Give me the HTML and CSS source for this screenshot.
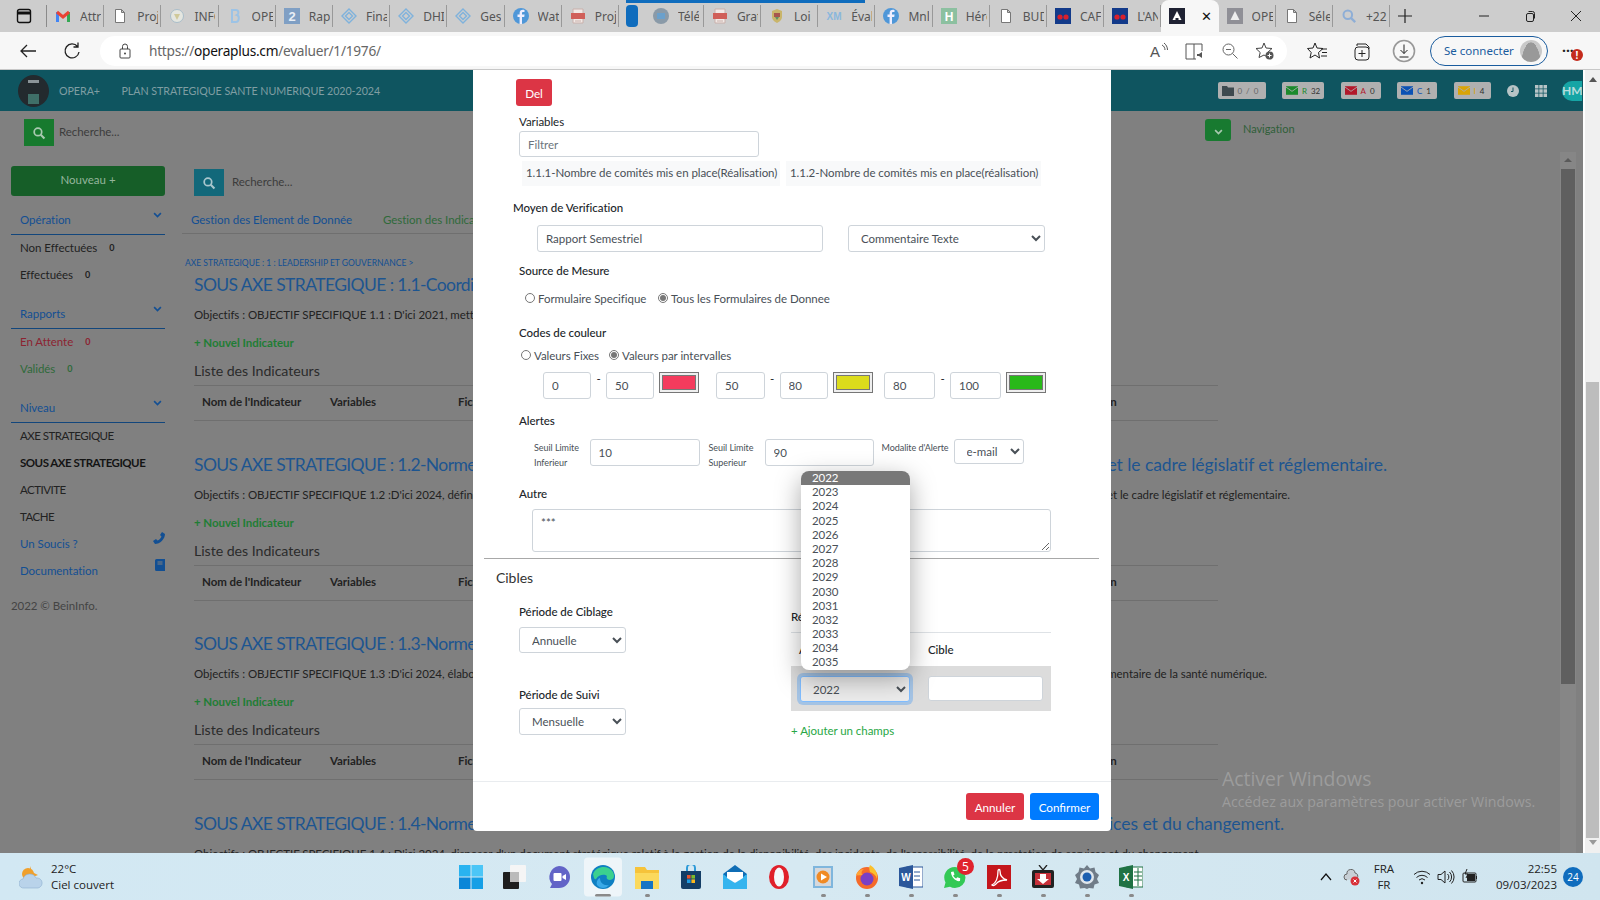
FILE: index.html
```html
<!DOCTYPE html>
<html lang="fr">
<head>
  <meta charset="UTF-8">
  <title>OPERA+ - Evaluer</title>
  <link rel="stylesheet" href="styles.css">
</head>
<body>

  <!-- icon sprite -->
  <svg class="sprite" xmlns="http://www.w3.org/2000/svg">
    <symbol id="i-file" viewBox="0 0 16 16"><path d="M3.5 1.5h6l3 3v10h-9z M9.5 1.5v3h3" fill="#fff" stroke="#777"/></symbol>
    <symbol id="i-gmail" viewBox="0 0 16 16"><path d="M2.5 14V4" stroke="#4285f4" stroke-width="3" fill="none"/><path d="M13.5 14V4" stroke="#34a853" stroke-width="3" fill="none"/><path d="M2 4l6 5 6-5" stroke="#ea4335" stroke-width="3" fill="none"/></symbol>
    <symbol id="i-shield" viewBox="0 0 16 16"><circle cx="8" cy="8" r="6.5" fill="#e4e6e0" stroke="#a9bdc9"/><path d="M5 6h6l-3 6z" fill="#cfc99a"/></symbol>
    <symbol id="i-pale" viewBox="0 0 16 16"><path d="M5 2h4c3 0 3 4 1 5 3 1 2 7-1 7H5z" fill="none" stroke="#9cc3e6" stroke-width="2"/></symbol>
    <symbol id="i-two" viewBox="0 0 16 16"><rect width="16" height="16" fill="#7f9fc4"/><text x="8" y="13" font-size="13" font-weight="700" text-anchor="middle" fill="#e8eef5" font-family="Liberation Sans">2</text></symbol>
    <symbol id="i-diamond" viewBox="0 0 16 16"><path d="M8 1l7 7-7 7-7-7z" fill="none" stroke="#7fb2dc" stroke-width="1.4"/><path d="M8 4.5L11.5 8 8 11.5 4.5 8z" fill="none" stroke="#7fb2dc" stroke-width="1.4"/></symbol>
    <symbol id="i-fb" viewBox="0 0 16 16"><circle cx="8" cy="8" r="8" fill="#4f97d8"/><path d="M9 16V9h2.2l.4-2.5H9V5.2c0-.8.3-1.2 1.2-1.2h1.3V1.900C11 1.800 10.400 1.700 9.800 1.700 7.900 1.700 6.600 2.900 6.600 5v1.500H4.500V9h2.100v7z" fill="#eef"/></symbol>
    <symbol id="i-pdf" viewBox="0 0 16 16"><path d="M3 1h10v14H3z" fill="#f1e9e6" stroke="#c9b0ab"/><rect x="1" y="5" width="14" height="6" fill="#d0605a"/><path d="M5 13h6" stroke="#c9b0ab"/></symbol>
    <symbol id="i-crest" viewBox="0 0 16 16"><path d="M3 3l5-2 5 2v6c0 3-3 5-5 6-2-1-5-3-5-6z" fill="#c9b56a"/><path d="M5 5h6v4H5z" fill="#a7564e"/><path d="M6 9l2 3 2-3z" fill="#5e8f66"/></symbol>
    <symbol id="i-cap" viewBox="0 0 16 16"><rect width="16" height="16" fill="#123a8a"/><circle cx="5" cy="9" r="2.6" fill="#d8202c"/><circle cx="11" cy="9" r="2.6" fill="#d8202c"/></symbol>
    <symbol id="i-opera" viewBox="0 0 16 16"><rect width="16" height="16" fill="#1f2233"/><path d="M8 3l4.500 9h-9z" fill="#fff"/><path d="M6.500 10h3v2h-3z" fill="#1f2233"/></symbol>
    <symbol id="i-opera-off" viewBox="0 0 16 16"><rect width="16" height="16" fill="#8f8f96"/><path d="M8 3l4.500 9h-9z" fill="#eee"/></symbol>
    <symbol id="i-search" viewBox="0 0 16 16"><circle cx="6.800" cy="6.800" r="4.300" fill="none" stroke="currentColor" stroke-width="2"/><path d="M10 10l4.200 4.200" stroke="currentColor" stroke-width="2.400"/></symbol>
    <symbol id="i-chev" viewBox="0 0 12 8"><path d="M1.500 1.500L6 6l4.500-4.500" fill="none" stroke="currentColor" stroke-width="2.200"/></symbol>
    <symbol id="i-env" viewBox="0 0 14 10"><rect width="14" height="10" fill="currentColor"/><path d="M0 1l7 5 7-5" fill="none" stroke="#b0b0b0" stroke-width="1"/></symbol>
  </svg>

  <!-- Browser tabs -->
  <div class="tabbar">
    <div class="tab-side">
      <svg width="16" height="16" viewBox="0 0 16 16"><rect x="1.500" y="1.500" width="13" height="13" rx="2" fill="none" stroke="#111" stroke-width="1.400"/><path d="M1.500 5h13" stroke="#111" stroke-width="3"/></svg>
    </div>
    <div class="tab"><svg class="favicon"><use href="#i-gmail"/></svg><span>Attribution</span></div>
    <div class="tab"><svg class="favicon"><use href="#i-file"/></svg><span>Projet</span></div>
    <div class="tab"><svg class="favicon"><use href="#i-shield"/></svg><span>INFOS</span></div>
    <div class="tab"><svg class="favicon"><use href="#i-pale"/></svg><span>OPERA</span></div>
    <div class="tab"><svg class="favicon"><use href="#i-two"/></svg><span>Rapport</span></div>
    <div class="tab"><svg class="favicon"><use href="#i-diamond"/></svg><span>Finance</span></div>
    <div class="tab"><svg class="favicon"><use href="#i-diamond"/></svg><span>DHIS2</span></div>
    <div class="tab"><svg class="favicon"><use href="#i-diamond"/></svg><span>Gestion</span></div>
    <div class="tab"><svg class="favicon"><use href="#i-fb"/></svg><span>Watch</span></div>
    <div class="tab"><svg class="favicon"><use href="#i-pdf"/></svg><span>Projet</span></div>
    <div class="tab-group"><i class="group-pill"></i><i class="group-line"></i></div>
    <div class="tab tab-wide"><svg class="favicon" viewBox="0 0 16 16"><circle cx="8" cy="8" r="8" fill="#8a9aa8"/><rect x="4" y="5" width="8" height="6" fill="#6aa0cc"/></svg><span>Télécharger</span></div>
    <div class="tab"><svg class="favicon"><use href="#i-pdf"/></svg><span>Gratuit</span></div>
    <div class="tab"><svg class="favicon"><use href="#i-crest"/></svg><span>Loi</span></div>
    <div class="tab"><svg class="favicon" viewBox="0 0 16 16"><text x="8" y="12" font-size="10" font-weight="700" text-anchor="middle" fill="#8ab7dd" font-family="Liberation Sans">XM</text></svg><span>Évaluation</span></div>
    <div class="tab"><svg class="favicon"><use href="#i-fb"/></svg><span>Mnl</span></div>
    <div class="tab"><svg class="favicon" viewBox="0 0 16 16"><rect width="16" height="16" fill="#8cc0a0"/><text x="8" y="13" font-size="12" font-weight="700" text-anchor="middle" fill="#fff" font-family="Liberation Sans">H</text></svg><span>Héros</span></div>
    <div class="tab"><svg class="favicon"><use href="#i-file"/></svg><span>BUDGET</span></div>
    <div class="tab"><svg class="favicon"><use href="#i-cap"/></svg><span>CAFE</span></div>
    <div class="tab"><svg class="favicon"><use href="#i-cap"/></svg><span>L'ANALYSE</span></div>
    <div class="tab tab-active"><svg class="favicon"><use href="#i-opera"/></svg><b>&#x2715;</b></div>
    <div class="tab"><svg class="favicon"><use href="#i-opera-off"/></svg><span>OPERA</span></div>
    <div class="tab"><svg class="favicon"><use href="#i-file"/></svg><span>Sélection</span></div>
    <div class="tab"><svg class="favicon tab-search"><use href="#i-search"/></svg><span>+22</span></div>
    <div class="tab-new">
      <svg width="16" height="16" viewBox="0 0 16 16"><path d="M8 1v14M1 8h14" stroke="#222" stroke-width="1.200"/></svg>
    </div>
    <div class="win-btns">
      <svg width="12" height="12" viewBox="0 0 12 12"><path d="M1 6h10" stroke="#222"/></svg>
      <svg width="12" height="12" viewBox="0 0 12 12"><rect x="2.500" y="3.500" width="7" height="8" rx="1.500" fill="none" stroke="#222"/><path d="M4.500 1.500h4a2 2 0 0 1 2 2v5" fill="none" stroke="#222"/></svg>
      <svg width="12" height="12" viewBox="0 0 12 12"><path d="M1 1l10 10M11 1L1 11" stroke="#222"/></svg>
    </div>
  </div>

  <!-- Address bar -->
  <div class="addressbar">
    <svg class="nav-icon" width="20" height="20" viewBox="0 0 20 20"><path d="M18 10H3M9 4l-6 6 6 6" fill="none" stroke="#222" stroke-width="1.300"/></svg>
    <svg class="nav-icon" width="20" height="20" viewBox="0 0 20 20"><path d="M15.500 5.500A7 7 0 1 0 17 11M16 1.500v4.500h-4.500" fill="none" stroke="#222" stroke-width="1.300"/></svg>
    <div class="omnibox">
      <svg width="14" height="16" viewBox="0 0 14 16"><rect x="2" y="6" width="10" height="9" rx="1" fill="none" stroke="#444"/><path d="M4.500 6V3.500a2.500 2.500 0 0 1 5 0V6" fill="none" stroke="#444"/><circle cx="7" cy="10.500" r="1" fill="#444"/></svg>
      <span class="url">https://<em>operaplus.cm</em>/evaluer/1/1976/</span>
      <div class="omni-tools">
        <svg width="20" height="20" viewBox="0 0 20 20"><text x="1" y="16" font-size="15" fill="#555" font-family="Liberation Sans">A</text><path d="M13 4c2 1 3 3 3 5M15 2c2 1.500 3.500 4 3.500 7" fill="none" stroke="#555"/></svg>
        <svg width="20" height="20" viewBox="0 0 20 20"><path d="M1 3h8v15H1zM9 3h8v7M9 18h2" fill="none" stroke="#555"/><path d="M12 13h2l3-2v6l-3-2h-2z" fill="#555"/></svg>
        <svg width="18" height="18" viewBox="0 0 18 18"><circle cx="7.500" cy="7.500" r="5.500" fill="none" stroke="#666"/><path d="M5 7.500h5M11.500 11.500l5 5" stroke="#666"/></svg>
        <svg width="20" height="20" viewBox="0 0 20 20"><path d="M9 2l2 5 6 .5-4.500 4 1 5-4.500-2.500-5 2.500 1.200-5L1 7.500 7 7z" fill="none" stroke="#444"/><circle cx="14.500" cy="14.500" r="4" fill="#555"/><path d="M14.500 12.500v4M12.500 14.500h4" stroke="#fff"/></svg>
      </div>
    </div>
    <svg class="bar-icon" width="20" height="20" viewBox="0 0 20 20"><path d="M8 2l2 5 6 .5-4.500 4 1 5.500-4.500-3-5 3 1.200-5.500L0.500 7.500 6 7z" fill="none" stroke="#222"/><path d="M14 8h6M15 11.500h5M14 15h6" stroke="#222"/></svg>
    <svg class="bar-icon bar-col" width="20" height="20" viewBox="0 0 20 20"><path d="M4 5V3h9l3 3v2" fill="none" stroke="#222"/><rect x="2" y="6" width="14" height="13" rx="3" fill="none" stroke="#222"/><path d="M9 9v7M5.500 12.500h7" stroke="#222"/></svg>
    <svg class="bar-icon bar-dl" width="24" height="24" viewBox="0 0 24 24"><circle cx="12" cy="12" r="10.500" fill="none" stroke="#999" stroke-width="1.600"/><path d="M12 5.500v9M8.500 11l3.500 3.500 3.500-3.500M7.500 18h9" fill="none" stroke="#222"/></svg>
    <div class="signin"><span>Se connecter</span><i class="avatar"></i></div>
    <div class="more">···<i>!</i></div>
  </div>

  <!-- Browser viewport -->
  <div class="viewport">
    <div class="page">
      <header class="topbar">
        <div class="logo"><i></i></div>
        <span class="brand">OPERA+</span>
        <span class="plan">PLAN STRATEGIQUE SANTE NUMERIQUE 2020-2024</span>
        <div class="chips">
          <div class="chip chip-folder">
            <svg width="12" height="10" viewBox="0 0 12 10"><path d="M0 0h5l1 1.500h6V10H0z" fill="#3e4a4f"/></svg>
            <span>0 &nbsp;/&nbsp; 0</span>
          </div>
          <div class="chip chip-r"><svg class="env"><use href="#i-env"/></svg><span class="c-letter">R</span><span>32</span></div>
          <div class="chip chip-a"><svg class="env"><use href="#i-env"/></svg><span class="c-letter">A</span><span>0</span></div>
          <div class="chip chip-c"><svg class="env"><use href="#i-env"/></svg><span class="c-letter">C</span><span>1</span></div>
          <div class="chip chip-i"><svg class="env"><use href="#i-env"/></svg><span class="c-letter">I</span><span>4</span></div>
          <svg class="clock" width="12" height="12" viewBox="0 0 12 12"><circle cx="6" cy="6" r="6" fill="#b7c4c6"/><path d="M6 2.500V6.500H4" fill="none" stroke="#115560"/></svg>
          <svg class="apps" width="12" height="12" viewBox="0 0 12 12"><path d="M0 0h3.500v3.500H0zM4.250 0h3.500v3.500h-3.500zM8.500 0H12v3.500H8.500zM0 4.250h3.500v3.500H0zM4.250 4.250h3.500v3.500h-3.500zM8.500 4.250H12v3.500H8.500zM0 8.500h3.500V12H0zM4.250 8.500h3.500V12h-3.500zM8.500 8.500H12V12H8.500z" fill="#b7c4c6"/></svg>
          <div class="hm">HM</div>
        </div>
      </header>

      <div class="page-scroll">
        <div class="content">

          <div class="searchbar">
            <button class="search-btn search-green"><svg width="14" height="14"><use href="#i-search"/></svg></button>
            <span class="search-text">Recherche...</span>
            <div class="navigation">
              <button class="nav-toggle"><svg width="9" height="6"><use href="#i-chev"/></svg></button>
              <span>Navigation</span>
            </div>
          </div>

          <div class="columns">
            <!-- Sidebar -->
            <aside class="sidebar">
              <button class="btn-new">Nouveau +</button>

              <div class="sb-head"><span>Opération</span><svg width="9" height="6"><use href="#i-chev"/></svg></div>
              <div class="sb-item">Non Effectuées <small>0</small></div>
              <div class="sb-item">Effectuées <small>0</small></div>

              <div class="sb-head sb-gap"><span>Rapports</span><svg width="9" height="6"><use href="#i-chev"/></svg></div>
              <div class="sb-item sb-red">En Attente <small>0</small></div>
              <div class="sb-item sb-green">Validés <small>0</small></div>

              <div class="sb-head sb-gap"><span>Niveau</span><svg width="9" height="6"><use href="#i-chev"/></svg></div>
              <div class="sb-item sb-caps">AXE STRATEGIQUE</div>
              <div class="sb-item sb-caps sb-current">SOUS AXE STRATEGIQUE</div>
              <div class="sb-item sb-caps">ACTIVITE</div>
              <div class="sb-item sb-caps">TACHE</div>
              <div class="sb-item sb-link"><span>Un Soucis ?</span>
                <svg width="12" height="12" viewBox="0 0 12 12"><path d="M9 0l3 2c0 5-5 10-10 10L0 9l3-2 1.500 1.500C6 8 8 6 8.500 4.500L7 3z" fill="#124f93"/></svg>
              </div>
              <div class="sb-item sb-link"><span>Documentation</span>
                <svg width="10" height="12" viewBox="0 0 10 12"><path d="M1.500 0H10v12H1.500A1.500 1.500 0 0 1 0 10.500v-9A1.500 1.500 0 0 1 1.500 0z" fill="#124f93"/><path d="M2.500 3h5M2.500 5h5" stroke="#808080"/></svg>
              </div>
              <div class="sb-copy">2022 © BeinInfo.</div>
            </aside>

            <!-- Main -->
            <main class="main">
              <div class="main-search">
                <button class="search-btn search-teal"><svg width="14" height="14"><use href="#i-search"/></svg></button>
                <span class="search-text">Recherche...</span>
              </div>
              <nav class="main-tabs">
                <a class="tab-blue">Gestion des Element de Donnée</a>
                <a class="tab-green">Gestion des Indicateurs</a>
              </nav>
              <div class="crumb">AXE STRATEGIQUE : 1 : LEADERSHIP ET GOUVERNANCE &gt;</div>

              <section class="axis">
                <h4 class="axis-title"><span>SOUS AXE STRATEGIQUE : 1.1-Coordination</span></h4>
                <p class="axis-goal"><span>Objectifs : OBJECTIF SPECIFIQUE 1.1 : D'ici 2021, mettre en place</span></p>
                <a class="axis-add">+ Nouvel Indicateur</a>
                <h5 class="axis-list">Liste des Indicateurs</h5>
                <div class="axis-table"><span>Nom de l'Indicateur</span><span>Variables</span><span>Fichiers</span><span>Validation</span></div>
              </section>

              <section class="axis">
                <h4 class="axis-title title-12"><span>SOUS AXE STRATEGIQUE : 1.2-Normes</span><span>et le cadre législatif et réglementaire.</span></h4>
                <p class="axis-goal goal-12"><span>Objectifs : OBJECTIF SPECIFIQUE 1.2 :D'ici 2024, définir les normes</span><span>et le cadre législatif et réglementaire.</span></p>
                <a class="axis-add">+ Nouvel Indicateur</a>
                <h5 class="axis-list">Liste des Indicateurs</h5>
                <div class="axis-table"><span>Nom de l'Indicateur</span><span>Variables</span><span>Fichiers</span><span>Validation</span></div>
              </section>

              <section class="axis">
                <h4 class="axis-title"><span>SOUS AXE STRATEGIQUE : 1.3-Normes</span></h4>
                <p class="axis-goal goal-13"><span>Objectifs : OBJECTIF SPECIFIQUE 1.3 :D'ici 2024, élaborer</span><span>réglementaire de la santé numérique.</span></p>
                <a class="axis-add">+ Nouvel Indicateur</a>
                <h5 class="axis-list">Liste des Indicateurs</h5>
                <div class="axis-table"><span>Nom de l'Indicateur</span><span>Variables</span><span>Fichiers</span><span>Validation</span></div>
              </section>

              <section class="axis">
                <h4 class="axis-title title-14"><span>SOUS AXE STRATEGIQUE : 1.4-Normes</span><span>de services et du changement.</span></h4>
                <p class="axis-goal goal-14"><span>Objectifs : OBJECTIF SPECIFIQUE 1.4 : D'ici 2024, disposer d'un document stratégique relatif à la gestion de la disponibilité, des incidents, de l'accessibilité, de la prestation de services et du changement.</span></p>
              </section>
            </main>
          </div>
        </div>

        <div class="inner-scroll">
          <i class="sb-up"></i>
          <i class="inner-thumb"></i>
        </div>
      </div>

      <!-- Modal -->
      <div class="modal">
        <div class="modal-body">
          <button class="btn btn-del">Del</button>

          <label class="field-label label-vars">Variables</label>
          <input class="control filter" placeholder="Filtrer">
          <div class="var-chips">
            <span class="var-a">1.1.1-Nombre de comités mis en place(Réalisation)</span>
            <span class="var-b">1.1.2-Nombre de comités mis en place(réalisation)</span>
          </div>

          <label class="field-label label-moyen">Moyen de Verification</label>
          <div class="moyen-row">
            <input class="control moyen-input" value="Rapport Semestriel">
            <select class="control moyen-select"><option>Commentaire Texte</option></select>
          </div>

          <label class="field-label label-source">Source de Mesure</label>
          <div class="radios radios-source">
            <label class="radio-a"><input type="radio" name="source"> Formulaire Specifique</label>
            <label><input type="radio" name="source" checked> Tous les Formulaires de Donnee</label>
          </div>

          <label class="field-label label-codes">Codes de couleur</label>
          <div class="radios radios-codes">
            <label class="radio-b"><input type="radio" name="codes"> Valeurs Fixes</label>
            <label><input type="radio" name="codes" checked> Valeurs par intervalles</label>
          </div>

          <div class="range-row">
            <div class="range-group rg-a">
              <input class="control" value="0"><span class="dash">-</span><input class="control" value="50">
              <input class="swatch" type="color" value="#f43b5d">
            </div>
            <div class="range-group rg-b">
              <input class="control" value="50"><span class="dash">-</span><input class="control" value="80">
              <input class="swatch" type="color" value="#dcdc1c">
            </div>
            <div class="range-group rg-c">
              <input class="control" value="80"><span class="dash">-</span><input class="control" value="100">
              <input class="swatch" type="color" value="#29b919">
            </div>
          </div>

          <label class="field-label label-alert">Alertes</label>
          <div class="alert-row">
            <small class="lim-a">Seuil Limite<br>Inferieur</small>
            <input class="control lim-input-a" value="10">
            <small class="lim-b">Seuil Limite<br>Superieur</small>
            <input class="control lim-input-b" value="90">
            <small class="lim-c">Modalite d'Alerte</small>
            <select class="control lim-select"><option>e-mail</option></select>
          </div>

          <label class="field-label label-autre">Autre</label>
          <textarea class="control autre">***</textarea>

          <hr class="modal-hr">
          <div class="cibles-title">Cibles</div>

          <div class="cibles">
            <div class="cibles-left">
              <label class="field-label">Période de Ciblage</label>
              <select class="control period"><option>Annuelle</option></select>
              <label class="field-label label-suivi">Période de Suivi</label>
              <select class="control period period-b"><option>Mensuelle</option></select>
            </div>
            <div class="cibles-right">
              <label class="field-label label-repart">Répartition</label>
              <div class="cible-head"><span>Année</span><span>Cible</span></div>
              <div class="cible-row">
                <select class="control cible-year"><option>2022</option></select>
                <input class="control cible-input">
              </div>
              <a class="add-field">+ Ajouter un champs</a>
            </div>
          </div>
        </div>

        <div class="modal-footer">
          <button class="btn btn-cancel">Annuler</button>
          <button class="btn btn-ok">Confirmer</button>
        </div>

        <!-- open select list -->
        <ul class="year-list">
          <li class="year-current">2022</li><li>2023</li><li>2024</li><li>2025</li><li>2026</li><li>2027</li><li>2028</li>
          <li>2029</li><li>2030</li><li>2031</li><li>2032</li><li>2033</li><li>2034</li><li>2035</li>
        </ul>
      </div>

      <div class="activate">
        <div>Activer Windows</div>
        <small>Accédez aux paramètres pour activer Windows.</small>
      </div>
    </div>

    <!-- browser scrollbar -->
    <div class="page-scrollbar">
      <i class="arrow-up"></i>
      <i class="page-thumb"></i>
      <i class="arrow-down"></i>
    </div>
  </div>

  <!-- Windows taskbar -->
  <footer class="taskbar">
    <div class="weather">
      <svg width="24" height="26" viewBox="0 0 24 26"><path d="M11 2l2 6 6 3-8 3z" fill="#f0a02c"/><circle cx="9" cy="10" r="6" fill="#f0a02c"/><path d="M5 24a4.500 4.500 0 0 1-1-9 7 7 0 0 1 13-1 5 5 0 0 1 2 10z" fill="#b9d3ea" stroke="#8eb0d0" stroke-width=".6"/></svg>
      <div class="weather-text"><span>22°C</span><span>Ciel couvert</span></div>
    </div>

    <div class="dock">
      <div class="dock-item dock-start"><svg width="24" height="24" viewBox="0 0 24 24"><path d="M0 0h11.500v11.500H0z" fill="#29b3f0"/><path d="M12.500 0H24v11.500H12.500z" fill="#4cc6f7"/><path d="M0 12.500h11.500V24H0z" fill="#0a86d8"/><path d="M12.500 12.500H24V24H12.500z" fill="#159fe6"/></svg></div>
      <div class="dock-item"><svg width="24" height="24" viewBox="0 0 24 24"><rect x="7" y="0" width="16" height="17" rx="1" fill="#f5f5f5"/><rect x="0" y="7" width="16" height="17" rx="1" fill="#1e1e1e"/><rect x="7" y="7" width="9" height="10" fill="#bbb"/></svg></div>
      <div class="dock-item"><svg width="24" height="24" viewBox="0 0 24 24"><path d="M12 1a11 11 0 0 1 0 22H3l2-4A11 11 0 0 1 12 1z" fill="#6264c7"/><rect x="6.500" y="8" width="8" height="8" rx="1" fill="#fff"/><path d="M15.500 11l3.500-2v6l-3.500-2z" fill="#fff"/></svg></div>
      <div class="dock-item dock-active"><svg width="24" height="24" viewBox="0 0 24 24"><circle cx="12" cy="12" r="12" fill="#0f7fc2"/><path d="M2 9C5 1 17-1 22 7c2 4 1 8-3 8-3 0-4-2-3-4-2-2-8-2-11 3-1 1-2 0-3-5z" fill="#3bd08f"/><path d="M9 13c0 5 4 8 9 7-3 4-9 4-12 0-1-3 1-7 3-7z" fill="#39a9e8"/></svg></div>
      <div class="dock-item dock-open"><svg width="24" height="24" viewBox="0 0 24 24"><path d="M0 2h10l2 3h12v19H0z" fill="#f6c33a"/><path d="M0 8h24v16H0z" fill="#fbd95c"/><rect x="6" y="16" width="12" height="8" fill="#1574c4"/></svg></div>
      <div class="dock-item"><svg width="24" height="24" viewBox="0 0 24 24"><path d="M8 6V3a4 4 0 0 1 8 0v3" fill="none" stroke="#2f9bd8" stroke-width="2"/><path d="M2 6h20v16a2 2 0 0 1-2 2H4a2 2 0 0 1-2-2z" fill="#143e66"/><rect x="8" y="10" width="3.600" height="3.600" fill="#e9542e"/><rect x="12.400" y="10" width="3.600" height="3.600" fill="#7fba2a"/><rect x="8" y="14.400" width="3.600" height="3.600" fill="#1f9be0"/><rect x="12.400" y="14.400" width="3.600" height="3.600" fill="#fbb81e"/></svg></div>
      <div class="dock-item"><svg width="24" height="24" viewBox="0 0 24 24"><path d="M0 9L12 0l12 9v15H0z" fill="#0f6db5"/><path d="M0 9l12 9 12-9v15H0z" fill="#35b4ee"/><path d="M4 7h16v6l-8 5-8-5z" fill="#fff"/></svg></div>
      <div class="dock-item"><svg width="24" height="24" viewBox="0 0 24 24"><ellipse cx="12" cy="12" rx="10" ry="12" fill="#e0202a"/><ellipse cx="12" cy="12" rx="5" ry="9.500" fill="#f3f8fb"/></svg></div>
      <div class="dock-item dock-open"><svg width="24" height="24" viewBox="0 0 24 24"><rect x="2" y="1" width="20" height="22" fill="#7fb6dd"/><rect x="4" y="3" width="16" height="18" fill="#d5d8dc"/><circle cx="12" cy="12" r="6.500" fill="#f08a24"/><path d="M10 8.500l6 3.500-6 3.500z" fill="#fff"/></svg></div>
      <div class="dock-item dock-open"><svg width="24" height="24" viewBox="0 0 24 24"><circle cx="12" cy="13" r="11" fill="#f56a2a"/><circle cx="12" cy="14" r="6.500" fill="#7a3fc4"/><path d="M15 0c5 3 8 8 7 14-1-4-4-6-7-7-1-3-1-5 0-7z" fill="#fbc02d"/><path d="M1 10c1-3 4-6 8-6-3 2-3 5-1 6-3 0-5 1-7 0z" fill="#ffa436"/></svg></div>
      <div class="dock-item dock-open"><svg width="24" height="24" viewBox="0 0 24 24"><rect x="8" y="2" width="16" height="20" fill="#fff" stroke="#2b579a"/><path d="M15 7h6M15 11h6M15 15h6" stroke="#2b579a"/><path d="M0 3l14-3v24L0 21z" fill="#2b579a"/><text x="7" y="16" font-size="10" font-weight="700" text-anchor="middle" fill="#fff" font-family="Liberation Sans">W</text></svg></div>
      <div class="dock-item dock-open"><svg width="24" height="24" viewBox="0 0 24 24"><path d="M12 2a10.500 10.500 0 0 1 0 21 10 10 0 0 1-5-1.300L1 23l1.500-5.500A10.500 10.500 0 0 1 12 2z" fill="#33c956"/><path d="M8 7l2.500-.5 1 3-1.300 1c.6 1.500 1.500 2.400 3 3l1-1.300 3 1L17 16c-4 1-9-4-9-9z" fill="#fff"/></svg><b class="dock-badge">5</b></div>
      <div class="dock-item dock-open"><svg width="24" height="24" viewBox="0 0 24 24"><rect width="24" height="24" fill="#c4161c"/><path d="M5 20c4-2 6-8 6-14 0-2 2-2 2 0 0 5 3 8 7 9-4 0-9 1-11 4-1 1-3 2-4 1z" fill="none" stroke="#fff" stroke-width="1.300"/></svg></div>
      <div class="dock-item dock-open"><svg width="24" height="24" viewBox="0 0 24 24"><path d="M8 0l4 5 4-5" fill="none" stroke="#222" stroke-width="1.300"/><rect x="1" y="5" width="22" height="18" rx="2" fill="#222"/><rect x="4" y="8" width="16" height="12" fill="#c8303a"/><path d="M9 9h6v5h3l-6 5-6-5h3z" fill="#fff"/></svg></div>
      <div class="dock-item dock-open"><svg width="24" height="24" viewBox="0 0 24 24"><path d="M12 0l3 3.500 4.500-1 1 4.500 3.500 3-2 4 2 4-4.500 1.500-1 4-4.500-.5L12 24l-2.500-1-4.500.5-1-4L0 18l2-4-2-4 3.500-3 1-4.500 4.500 1z" fill="#707c88"/><circle cx="12" cy="12" r="7" fill="#dfe6ec"/><circle cx="12" cy="12" r="4.500" fill="#1d5fb0"/></svg></div>
      <div class="dock-item dock-open"><svg width="24" height="24" viewBox="0 0 24 24"><rect x="8" y="2" width="16" height="20" fill="#fff" stroke="#1f7244"/><path d="M15 7h8M15 11h8M15 15h8M19 3v18" stroke="#1f7244"/><path d="M0 3l14-3v24L0 21z" fill="#1f7244"/><text x="7" y="16" font-size="10" font-weight="700" text-anchor="middle" fill="#fff" font-family="Liberation Sans">X</text></svg></div>
    </div>

    <div class="tray">
      <svg class="tray-caret" width="12" height="8" viewBox="0 0 12 8"><path d="M1 7l5-6 5 6" fill="none" stroke="#111" stroke-width="1.200"/></svg>
      <svg class="tray-cloud" width="18" height="18" viewBox="0 0 18 18"><path d="M4 12a3 3 0 0 1 0-6 4 4 0 0 1 8-1 3 3 0 0 1 2 5" fill="#c8d0d6" stroke="#666"/><circle cx="12" cy="13" r="4.500" fill="#d8323a"/><path d="M10.500 11.500l3 3M13.500 11.500l-3 3" stroke="#fff"/></svg>
      <div class="tray-lang"><span>FRA</span><span>FR</span></div>
      <svg class="tray-wifi" width="18" height="16" viewBox="0 0 18 16"><path d="M1 5.500a11.500 11.500 0 0 1 16 0M3.500 8.500a8 8 0 0 1 11 0M6 11a4.500 4.500 0 0 1 6 0" fill="none" stroke="#222"/><circle cx="9" cy="14" r="1.200" fill="#222"/></svg>
      <svg class="tray-sound" width="18" height="16" viewBox="0 0 18 16"><path d="M1 5.500h3L8 2v12l-4-3.500H1z" fill="none" stroke="#222"/><path d="M10.500 5a4 4 0 0 1 0 6M12.500 3a7 7 0 0 1 0 10M14.500 1.500a9.500 9.500 0 0 1 0 13" fill="none" stroke="#222"/></svg>
      <svg class="tray-batt" width="16" height="16" viewBox="0 0 16 16"><rect x="1" y="4" width="13" height="9" rx="1" fill="none" stroke="#222"/><rect x="5" y="5" width="8" height="7" fill="#222"/><path d="M14.500 7v3" stroke="#222"/><path d="M5 0L3 5h3l-2 4" fill="none" stroke="#222"/></svg>
      <div class="tray-clock"><span>22:55</span><span>09/03/2023</span></div>
      <div class="tray-badge">24</div>
    </div>
  </footer>

</body>
</html>
```

FILE: styles.css
```css
/* Global */
* {
  box-sizing: border-box;
}

html, body {
  margin: 0;
  height: 900px;
  overflow: hidden;
}

body {
  font-family: Lato, "Noto Sans", sans-serif;
  font-size: 11.5px;
  letter-spacing: -.05px;
  color: #222;
  display: flex;
  flex-direction: column;
  background: #fff;
}

.sprite {
  position: absolute;
  width: 0;
  height: 0;
}

button {
  border: none;
  font-family: inherit;
  padding: 0;
}

/* Browser tabs */
.tabbar {
  height: 32px;
  flex: none;
  background: #cdcdcd;
  display: flex;
  align-items: center;
  position: relative;
  font-family: "Noto Sans", sans-serif;
  letter-spacing: 0;
}

.tab-side {
  width: 47px;
  padding-left: 16px;
  display: flex;
  border-right: 1px solid #8a8a8a;
  height: 22px;
  align-items: center;
}

.tab {
  flex: 0 0 57.2px;
  height: 22px;
  display: flex;
  align-items: center;
  padding-left: 8px;
  gap: 9px;
  border-right: 1px solid #999;
  overflow: hidden;
  font-size: 12px;
  color: #555;
  white-space: nowrap;
  position: relative;
}

.tab span {
  overflow: hidden;
  flex: 0 0 21px;
}

.favicon {
  width: 16px;
  height: 16px;
  flex: none;
}

.tab-search {
  color: #8eaed6;
}

.tab-wide {
  flex-basis: 59px;
}

.tab-active {
  height: 32px;
  background: #f7f7f7;
  border-right: none;
  border-radius: 8px 8px 0 0;
  gap: 16px;
  align-self: flex-end;
}

.tab-active b {
  font-weight: 400;
  font-size: 13px;
  color: #111;
}

.tab-group {
  flex: 0 0 26px;
  height: 22px;
  padding-left: 7px;
  position: relative;
}

.group-pill {
  display: block;
  width: 12px;
  height: 22px;
  background: #0f6cbd;
  border-radius: 4px;
}

.group-line {
  position: absolute;
  top: -5px;
  left: 7px;
  width: 239px;
  height: 3px;
  background: #0f6cbd;
}

.tab-new {
  margin-left: 7px;
  display: flex;
}

.win-btns {
  margin-left: auto;
  display: flex;
  gap: 34px;
  padding-right: 18px;
}

/* Address bar */
.addressbar {
  height: 38px;
  flex: none;
  background: #f7f7f7;
  display: flex;
  align-items: center;
  border-bottom: 1px solid #c8c8c8;
  padding-left: 18px;
  font-family: "Noto Sans", sans-serif;
  letter-spacing: 0;
}

.nav-icon {
  margin-right: 24px;
}

.omnibox {
  margin-left: -6px;
  width: 1187px;
  height: 30px;
  background: #fff;
  border-radius: 15px;
  display: flex;
  align-items: center;
  padding-left: 18px;
  gap: 17px;
}

.url {
  font-size: 13.7px;
  color: #666;
  letter-spacing: -.02em;
}

.url em {
  font-style: normal;
  color: #111;
}

.omni-tools {
  margin-left: auto;
  display: flex;
  align-items: center;
  gap: 16px;
  padding-right: 12px;
}

.bar-icon {
  margin-left: 20px;
  flex: none;
}

.bar-col {
  margin-left: 26px;
}

.bar-dl {
  margin-left: 19px;
}

.signin {
  margin-left: 14px;
  width: 118px;
  height: 30px;
  border: 1px solid #1a5c9e;
  border-radius: 15px;
  display: flex;
  align-items: center;
  padding-left: 13px;
  gap: 6px;
  color: #1a5c9e;
  font-size: 11.5px;
  white-space: nowrap;
}

.avatar {
  width: 22px;
  height: 22px;
  border-radius: 50%;
  background: radial-gradient(circle at 50% 35%, #999 0 5px, transparent 5.5px), radial-gradient(ellipse at 50% 100%, #999 0 9px, #c9c9c9 9.5px);
  flex: none;
}

.more {
  position: relative;
  margin-left: 14px;
  font-weight: 700;
  font-size: 14px;
  line-height: 14px;
}

.more i {
  position: absolute;
  left: 9px;
  top: 5px;
  width: 12px;
  height: 12px;
  border-radius: 50%;
  background: #c42b1c;
  color: #fff;
  font-size: 10px;
  font-style: normal;
  line-height: 12px;
  text-align: center;
}

/* Viewport */
.viewport {
  height: 783px;
  flex: none;
  display: flex;
}

.page {
  width: 1583px;
  position: relative;
  overflow: hidden;
  background: #808080;
  display: flex;
  flex-direction: column;
}

.page-scroll {
  flex: 1;
  display: flex;
  min-height: 0;
}

.content {
  flex: 1;
  min-width: 0;
  overflow: hidden;
}

/* Top bar */
.topbar {
  height: 41px;
  flex: none;
  background: #0f5560;
  display: flex;
  align-items: center;
  padding-left: 18px;
  color: #7f9ea3;
  font-size: 10.7px;
}

.logo {
  width: 31px;
  height: 32px;
  border-radius: 50%;
  background: #232a2e;
  padding: 5px 10px 3px;
  margin-right: 10px;
}

.logo i {
  display: block;
  height: 100%;
  background: linear-gradient(#8b9498 0 3px, transparent 3px 14px, #3f6f68 14px);
}

.plan {
  margin-left: 21.5px;
}

.chips {
  margin-left: auto;
  display: flex;
  align-items: center;
  gap: 16.5px;
  padding-right: 1px;
}

.chip {
  height: 17px;
  background: #b0b0b0;
  border-radius: 2px;
  display: flex;
  align-items: center;
  gap: 4px;
  padding-left: 4px;
  font-size: 8px;
  color: #2e2e2e;
}

.chip-folder {
  width: 48px;
}

.chip-folder span {
  color: #666;
}

.chip-r {
  width: 42px;
  color: #333;
}

.chip-a {
  width: 40px;
}

.chip-c {
  width: 40px;
}

.chip-i {
  width: 37px;
}

.env {
  width: 12px;
  height: 9px;
}

.chip-r .env, .chip-r .c-letter {
  color: #1c8a2c;
}

.chip-a .env, .chip-a .c-letter {
  color: #b2182b;
}

.chip-c .env, .chip-c .c-letter {
  color: #0c52b4;
}

.chip-i .env, .chip-i .c-letter {
  color: #d9a406;
}

.apps {
  margin-left: -1px;
}

.hm {
  width: 20px;
  height: 20px;
  overflow: hidden;
  border-radius: 10px 0 0 10px;
  background: #16a5a5;
  color: #b7dcdc;
  font-size: 12px;
  font-weight: 700;
  line-height: 20px;
  white-space: nowrap;
  margin-left: -1px;
}

/* Search rows */
.searchbar {
  height: 55px;
  display: flex;
  align-items: flex-start;
  padding: 8px 0 0 24px;
}

.search-btn {
  width: 30px;
  height: 27px;
  display: flex;
  align-items: center;
  justify-content: center;
  color: #a9c9b0;
  flex: none;
}

.search-green {
  background: #177a2e;
}

.search-teal {
  background: #12687a;
  color: #a8c6cd;
}

.search-text {
  color: #3c3c3c;
  line-height: 25px;
  margin-left: 5px;
  width: 80px;
}

.navigation {
  margin-left: 1066px;
  display: flex;
  align-items: flex-start;
  color: #2f5f38;
  font-size: 11px;
}

.nav-toggle {
  width: 26px;
  height: 22px;
  border-radius: 3px;
  background: #187a30;
  color: #a9c9b0;
  margin-right: 12px;
}

.navigation span {
  line-height: 20px;
}

.columns {
  display: flex;
}

/* Sidebar */
.sidebar {
  width: 182px;
  flex: none;
  padding-left: 11px;
  color: #222;
}

.btn-new {
  display: block;
  width: 154px;
  height: 30px;
  background: #165e28;
  color: #94b59c;
  border-radius: 3px;
  font-size: 11.5px;
  padding-bottom: 3px;
}

.sb-head {
  width: 154px;
  height: 29px;
  margin-top: 10px;
  padding: 0 0 2px 9px;
  border-bottom: 1px solid #12467c;
  display: flex;
  align-items: center;
  justify-content: space-between;
  color: #134f93;
}

.sb-head svg {
  align-self: flex-start;
  margin: 6px 3px 0 0;
}

.sb-gap {
  margin-top: 11px;
}

.sb-item {
  width: 154px;
  height: 27px;
  padding: 0 0 2px 9px;
  display: flex;
  align-items: center;
  gap: 4px;
  white-space: nowrap;
}

.sb-item small {
  font-size: 9px;
  font-weight: 700;
  margin-left: 8px;
}

.sb-red {
  color: #8c2331;
}

.sb-green {
  color: #2f6a3a;
}

.sb-caps {
  letter-spacing: -.5px;
}

.sb-current {
  font-weight: 700;
  color: #141414;
}

.sb-link {
  color: #134f93;
  justify-content: space-between;
}

.sb-link svg {
  align-self: flex-start;
  margin-top: 1px;
}

.sb-copy {
  margin-top: 11px;
  height: 20px;
  line-height: 20px;
  color: #444;
}

/* Main */
.main {
  flex: 1;
  min-width: 0;
  overflow: hidden;
}

.main-search {
  display: flex;
  margin: 3px 0 0 12px;
  height: 27px;
}

.main-search .search-text {
  margin-left: 8px;
}

.main-tabs {
  height: 38px;
  width: 900px;
  border-bottom: 1px solid #6f6f6f;
  padding: 10px 0 0 9px;
  line-height: 28px;
  display: flex;
  gap: 31px;
  align-items: center;
}

.tab-blue {
  color: #134f93;
}

.tab-green {
  color: #2f6a3a;
}

.crumb {
  margin: 22px 0 0 3px;
  font-size: 8.5px;
  letter-spacing: 0;
  line-height: 14px;
  color: #134f93;
  height: 16px;
}

.axis {
  margin: 0 0 30.5px 12px;
  width: 1024px;
}

.axis-title {
  margin: 0;
  font-size: 17.5px;
  font-weight: 400;
  line-height: 26px;
  height: 26px;
  color: #1d5590;
  white-space: nowrap;
  display: flex;
  justify-content: space-between;
}

.axis-title span:first-child {
  letter-spacing: -.6px;
}

.title-12 {
  width: 1193px;
}

.title-14 {
  width: 1090px;
}

.axis-goal {
  margin: 3px 0 0;
  height: 28px;
  line-height: 28px;
  white-space: nowrap;
  color: #222;
  display: flex;
  justify-content: space-between;
}

.goal-12 {
  width: 1096px;
}

.goal-13 {
  width: 1073px;
}

.axis-add {
  display: block;
  height: 28px;
  line-height: 28px;
  color: #1f7d35;
  font-weight: 700;
}

.axis-list {
  margin: 0;
  height: 28px;
  line-height: 28px;
  font-size: 14.2px;
  font-weight: 400;
  color: #2b2b2b;
}

.axis-table {
  border-top: 1px solid #6f6f6f;
  border-bottom: 1px solid #6f6f6f;
  height: 36px;
  display: grid;
  grid-template-columns: 128px 128px 1fr 160px;
  align-items: center;
  padding: 0 0 3px 8px;
  font-weight: 700;
  color: #222;
}

.axis-table span:last-child {
  padding-left: 8px;
}

/* Inner scrollbar */
.inner-scroll {
  width: 16px;
  margin: 41px 7px 0 0;
  flex: none;
  background: #868686;
  padding: 0 1px;
}

.sb-up {
  display: block;
  height: 17px;
  position: relative;
}

.sb-up::before {
  content: "";
  position: absolute;
  left: 3px;
  top: 6px;
  border-left: 4px solid transparent;
  border-right: 4px solid transparent;
  border-bottom: 4px solid #5a5a5a;
}

.inner-thumb {
  display: block;
  height: 515px;
  background: #5f5f5f;
}

/* Browser scrollbar */
.page-scrollbar {
  flex: 1;
  background: #f0f0f0;
  border-left: 2px solid #fff;
  display: flex;
  flex-direction: column;
  align-items: center;
  padding: 7px 0 8px;
}

.arrow-up, .arrow-down {
  width: 0;
  height: 0;
  border-left: 4px solid transparent;
  border-right: 4px solid transparent;
}

.arrow-up {
  border-bottom: 5px solid #555;
}

.arrow-down {
  border-top: 5px solid #999;
}

.page-thumb {
  width: 13px;
  background: #bdbdbd;
  margin-top: 300px;
  flex: 1;
  margin-bottom: 2px;
}

/* Modal */
.modal {
  position: absolute;
  top: 0;
  left: 473px;
  width: 638px;
  height: 761px;
  background: #fff;
  border-radius: 0 0 4px 4px;
  display: flex;
  flex-direction: column;
  color: #212529;
}

.modal-body {
  flex: 1;
  padding-left: 46px;
}

.btn {
  height: 27px;
  border-radius: 3px;
  color: #fff;
  font-size: 11.7px;
}

.btn-del {
  display: block;
  width: 36px;
  margin: 9px 0 0 -3px;
  background: #dc3545;
}

.field-label {
  display: block;
  font-size: 11.5px;
  font-weight: 500;
  height: 20px;
  line-height: 20px;
  white-space: nowrap;
}

.label-vars {
  margin-top: 6px;
  height: 19px;
  font-weight: 400;
}

.control {
  border: 1px solid #ced4da;
  border-radius: 3px;
  background: #fff;
  color: #495057;
  font-family: inherit;
  font-size: 11.5px;
  padding: 0 8px;
  height: 27px;
  outline: none;
}

.control::placeholder {
  color: #6c757d;
}

.filter {
  display: block;
  width: 240px;
  height: 26px;
}

.var-chips {
  margin: 4px 0 0 3px;
  display: flex;
  gap: 6px;
  height: 25px;
  line-height: 24px;
  white-space: nowrap;
  color: #495057;
}

.var-chips span {
  background: #f8f9fa;
  padding-left: 4px;
  overflow: hidden;
}

.var-a {
  width: 258px;
}

.var-b {
  width: 255px;
}

.label-moyen {
  margin: 12px 0 0 -6px;
}

.moyen-row {
  margin: 7px 0 0 18px;
  display: flex;
  gap: 25px;
}

.moyen-input {
  width: 286px;
}

.moyen-select {
  width: 197px;
}

.label-source {
  margin-top: 9px;
}

.radios {
  display: flex;
  height: 20px;
  align-items: center;
  color: #495057;
}

.radios label {
  display: flex;
  align-items: center;
  white-space: nowrap;
}

.radios input {
  width: 10px;
  height: 10px;
  margin: 0 3px 0 0;
  accent-color: #777;
}

.radios-source {
  margin: 7px 0 0 6px;
}

.radio-a {
  width: 133px;
}

.label-codes {
  margin-top: 15px;
}

.radios-codes {
  margin: 2px 0 0 2px;
}

.radio-b {
  width: 88px;
}

.range-row {
  margin: 7px 0 0 24px;
  display: flex;
}

.range-group {
  display: grid;
  grid-template-columns: 1fr 15px 1fr 45px;
}

.range-group .control {
  width: 100%;
}

.dash {
  text-align: center;
  line-height: 14px;
}

.swatch {
  width: 40px;
  height: 21px;
  padding: 2px;
  margin: 0 0 0 5px;
  background: #efefef;
  border: 1px solid #767676;
}

.swatch::-webkit-color-swatch-wrapper {
  padding: 0;
}

.swatch::-webkit-color-swatch {
  border: 1px solid #777;
}

.rg-a {
  width: 156px;
  margin-right: 17px;
}

.rg-b {
  width: 157px;
  margin-right: 11px;
}

.rg-c {
  width: 162px;
}

.label-alert {
  margin-top: 12px;
}

.alert-row {
  margin: 8px 0 0 15px;
  display: flex;
  align-items: flex-start;
  height: 27px;
}

.alert-row small {
  font-size: 9px;
  line-height: 15px;
  padding-top: 1px;
  white-space: nowrap;
  color: #495057;
}

.lim-a {
  width: 55.5px;
}

.lim-input-a {
  width: 110px;
}

.lim-b {
  margin-left: 9px;
  width: 56px;
}

.lim-input-b {
  width: 109px;
}

.lim-c {
  margin-left: 8px;
  width: 72px;
}

.lim-select {
  width: 70px;
  height: 25px;
}

.label-autre {
  margin-top: 18px;
}

.autre {
  display: block;
  margin: 5px 0 0 13px;
  width: 519px;
  height: 43px;
  padding: 6px 8px 2px;
  resize: both;
}

.modal-hr {
  margin: 6px 0 0 -35px;
  width: 615px;
  height: 1px;
  border: none;
  background: #a8a8a8;
}

.cibles-title {
  margin: 9px 0 0 -23px;
  height: 20px;
  line-height: 20px;
  font-size: 14px;
  color: #333;
}

.cibles {
  display: grid;
  grid-template-columns: 272px 260px;
  margin-top: 14px;
}

.period {
  display: block;
  margin-top: 5px;
  width: 107px;
  height: 26px;
  padding-left: 8px;
}

.period-b {
  height: 27px;
  margin-top: 3px;
}

.label-suivi {
  margin-top: 32px;
}

.label-repart {
  margin-top: 5px;
  border-bottom: 1px solid #dee2e6;
  height: 26px;
  line-height: 20px;
}

.cible-head {
  display: grid;
  grid-template-columns: 129px 1fr;
  height: 33px;
  align-items: center;
  padding-left: 8px;
  font-weight: 500;
}

.cible-row {
  height: 45px;
  background: #dcdcdc;
  display: grid;
  grid-template-columns: 110px 115px;
  gap: 18px;
  padding: 10px 0 0 9px;
}

.cible-year {
  height: 26px;
  border-color: #80bdff;
  box-shadow: 0 0 0 3px rgba(0, 123, 255, .25);
  background: #ececec;
  width: 110px;
}

.cible-input {
  height: 25px;
}

.add-field {
  display: block;
  margin-top: 10px;
  line-height: 20px;
  color: #28a745;
}

.modal-footer {
  height: 50px;
  border-top: 1px solid #e9ecef;
  padding: 11px 12px 0 0;
  display: flex;
  justify-content: flex-end;
  gap: 6px;
  flex: none;
}

.btn-cancel {
  width: 58px;
  background: #dc3545;
}

.btn-ok {
  width: 69px;
  background: #007bff;
}

.year-list {
  position: absolute;
  top: 401px;
  left: 328px;
  width: 109px;
  margin: 0;
  padding: 0;
  list-style: none;
  background: #fff;
  border-radius: 8px;
  overflow: hidden;
  box-shadow: 0 8px 26px rgba(0, 0, 0, .35);
}

.year-list li {
  height: 14.2px;
  line-height: 14.2px;
  padding-left: 11px;
  color: #495057;
}

.year-list .year-current {
  background: #787878;
  color: #fff;
}

/* Watermark */
.activate {
  position: absolute;
  left: 1222px;
  top: 695px;
  color: #9c9c9c;
  font-family: "Open Sans", sans-serif;
  font-size: 19.4px;
  letter-spacing: 0;
  line-height: 28px;
}

.activate small {
  display: block;
  font-size: 14.2px;
  line-height: 18px;
}

/* Taskbar */
.taskbar {
  height: 47px;
  flex: none;
  background: linear-gradient(90deg, #d2e8f3, #d6e9f2 50%, #d0e5ef);
  display: flex;
  align-items: center;
  font-family: "Open Sans", sans-serif;
  letter-spacing: 0;
}

.weather {
  width: 459px;
  padding-left: 19px;
  display: flex;
  align-items: center;
  gap: 8px;
}

.weather-text {
  display: flex;
  flex-direction: column;
  line-height: 16px;
  font-size: 11.5px;
  color: #222;
}

.dock {
  display: flex;
  height: 47px;
  align-items: center;
}

.dock-item {
  width: 24px;
  margin-right: 20px;
  height: 38px;
  display: flex;
  align-items: center;
  justify-content: center;
  position: relative;
}

.dock-open::after, .dock-active::after {
  content: "";
  position: absolute;
  bottom: -1px;
  left: 10px;
  width: 5px;
  height: 3px;
  border-radius: 2px;
  background: #8a8a8a;
}

.dock-active {
  background: #eef5f9;
  box-shadow: 0 0 0 7px #eef5f9;
  clip-path: inset(0 -7px -1px -7px round 4px);
}

.dock-active::after {
  left: 4px;
  width: 16px;
}

.dock-badge {
  position: absolute;
  top: 0;
  right: -7px;
  width: 17px;
  height: 17px;
  border-radius: 50%;
  background: #e0232e;
  color: #fff;
  font-weight: 400;
  font-size: 12px;
  line-height: 17px;
  text-align: center;
}

.tray {
  margin-left: auto;
  display: flex;
  align-items: center;
  font-size: 11.5px;
  color: #222;
  padding-right: 17px;
}

.tray-cloud {
  margin: 0 0 0 11px;
}

.tray-lang {
  display: flex;
  flex-direction: column;
  align-items: center;
  line-height: 16px;
  width: 36px;
  margin-left: 5px;
}

.tray-wifi {
  margin-left: 11px;
}

.tray-sound {
  margin-left: 6px;
}

.tray-batt {
  margin-left: 7px;
}

.tray-clock {
  display: flex;
  flex-direction: column;
  align-items: flex-end;
  line-height: 16px;
  margin-left: 18px;
}

.tray-badge {
  margin-left: 6px;
  width: 20px;
  height: 20px;
  border-radius: 50%;
  background: #0f6cbd;
  color: #fff;
  font-size: 10px;
  line-height: 20px;
  text-align: center;
}
```
